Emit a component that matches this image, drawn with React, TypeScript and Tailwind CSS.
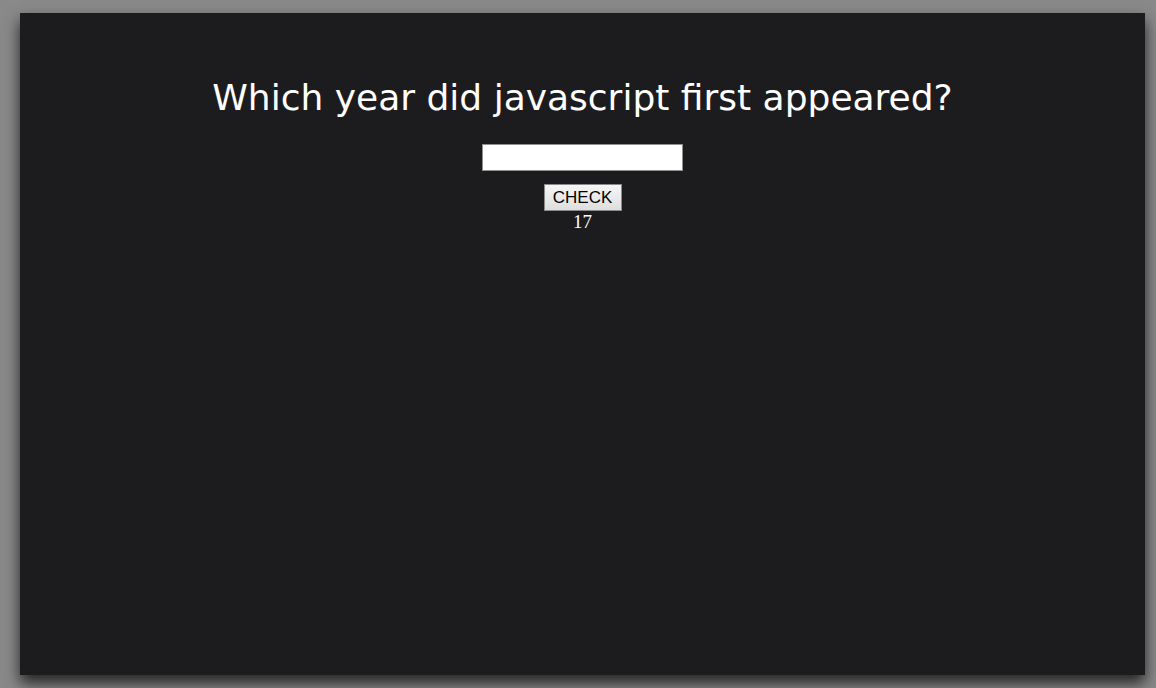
import React, { useState } from 'react';

const App = () => {
  const [year, setYear] = useState('');

  return (
    <div className="min-h-screen bg-[#898989] pt-[13px] pl-[20px]">
      <div className="w-[1125px] h-[662px] bg-[#1c1c1e] shadow-[0_8px_14px_rgba(0,0,0,0.75)] flex flex-col items-center pt-[63px]">
        <h1 className="text-white text-[36px] leading-[44px] font-['DejaVu_Sans',sans-serif]">
          Which year did javascript first appeared?
        </h1>
        <input
          value={year}
          onChange={(e) => setYear(e.target.value)}
          className="mt-[24px] w-[201px] h-[27px] bg-white border border-[#8f8f8f] outline-none px-1 text-[15px]"
        />
        <button className="mt-[13px] w-[78px] h-[27px] border border-[#8a8a8a] bg-gradient-to-b from-[#f6f6f6] to-[#dedede] text-[17px] text-black font-['Liberation_Sans',sans-serif] leading-none">
          CHECK
        </button>
        <p className="text-white text-[19px] leading-[22px] font-['Liberation_Serif',serif]">17</p>
      </div>
    </div>
  );
};

export default App;
